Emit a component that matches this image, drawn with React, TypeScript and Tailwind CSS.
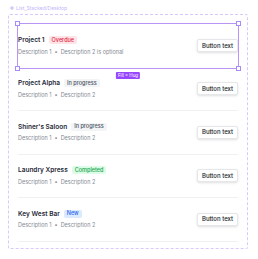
const rows = [
  { title: "Project 1", badge: "Overdue", tone: "bg-[#ffe4e6] text-[#e11d48]", desc2: "Description 2 is optional", selected: true },
  { title: "Project Alpha", badge: "In progress", tone: "bg-[#f3f4f6] text-[#4b5563]", desc2: "Description 2" },
  { title: "Shiner's Saloon", badge: "In progress", tone: "bg-[#f3f4f6] text-[#4b5563]", desc2: "Description 2" },
  { title: "Laundry Xpress", badge: "Completed", tone: "bg-[#dcfce7] text-[#16a34a]", desc2: "Description 2" },
  { title: "Key West Bar", badge: "New", tone: "bg-[#dbeafe] text-[#2563eb]", desc2: "Description 2" },
];

const Handle = ({ className }: { className: string }) => (
  <span className={`absolute w-[5px] h-[5px] bg-white border border-[#a78bfa] ${className}`} />
);

export default function App() {
  return (
    <div className="w-[258px] h-[259px] bg-white px-[8px] pt-[4px]" style={{ fontFamily: "Inter, 'Noto Sans', sans-serif" }}>
      <div className="flex items-center gap-[2px] h-[8px] pl-[2px] text-[5px] leading-none text-[#c4b5fd]">
        <svg width="4" height="4" viewBox="0 0 10 10">
          <path d="M5 0 L10 5 L5 10 L0 5 Z M5 3 L3 5 L5 7 L7 5 Z" fill="#c4b5fd" fillRule="evenodd" />
        </svg>
        <span>List_Stacked/Desktop</span>
      </div>
      <div className="mt-[2px] w-[240px] h-[235px] border border-dashed border-[#d8c8fc] rounded-[2px] px-[9px] pt-[9px]">
        {rows.map((r) => (
          <div
            key={r.title}
            className={`relative flex items-center justify-between ${r.selected ? "h-[43.5px]" : "h-[43.5px] border-b border-[#f1f1f3]"}`}
          >
            <div className="flex flex-col gap-[3px] pt-[1px]">
              <div className="flex items-center gap-[4px] h-[9px]">
                <span className="text-[6.5px] font-semibold text-[#1f2937] leading-none">{r.title}</span>
                <span className={`h-[8px] px-[3px] rounded-[2px] flex items-center text-[5.5px] font-medium leading-none ${r.tone}`}>
                  {r.badge}
                </span>
              </div>
              <div className="flex items-center gap-[3px] h-[9px] text-[5.5px] text-[#858a93] leading-none">
                <span>Description 1</span>
                <span>•</span>
                <span>{r.desc2}</span>
              </div>
            </div>
            <button className="h-[13px] w-[41px] rounded-[2px] border border-[#e5e7eb] bg-white shadow-sm text-[6px] font-medium text-[#111827] leading-none">
              Button text
            </button>
            {r.selected && (
              <>
                <div className="absolute -left-[1px] -right-[1px] -top-[1px] -bottom-[1px] border border-[#b794f6] pointer-events-none" />
                <Handle className="-left-[3px] -top-[3px]" />
                <Handle className="-right-[3px] -top-[3px]" />
                <Handle className="-left-[3px] -bottom-[3px]" />
                <Handle className="-right-[3px] -bottom-[3px]" />
                <span className="absolute left-1/2 -translate-x-1/2 -bottom-[11px] h-[7px] px-[2px] rounded-[1px] bg-[#9747ff] text-white text-[4.5px] leading-[7px] whitespace-nowrap">
                  Fill × Hug
                </span>
              </>
            )}
          </div>
        ))}
      </div>
    </div>
  );
}
